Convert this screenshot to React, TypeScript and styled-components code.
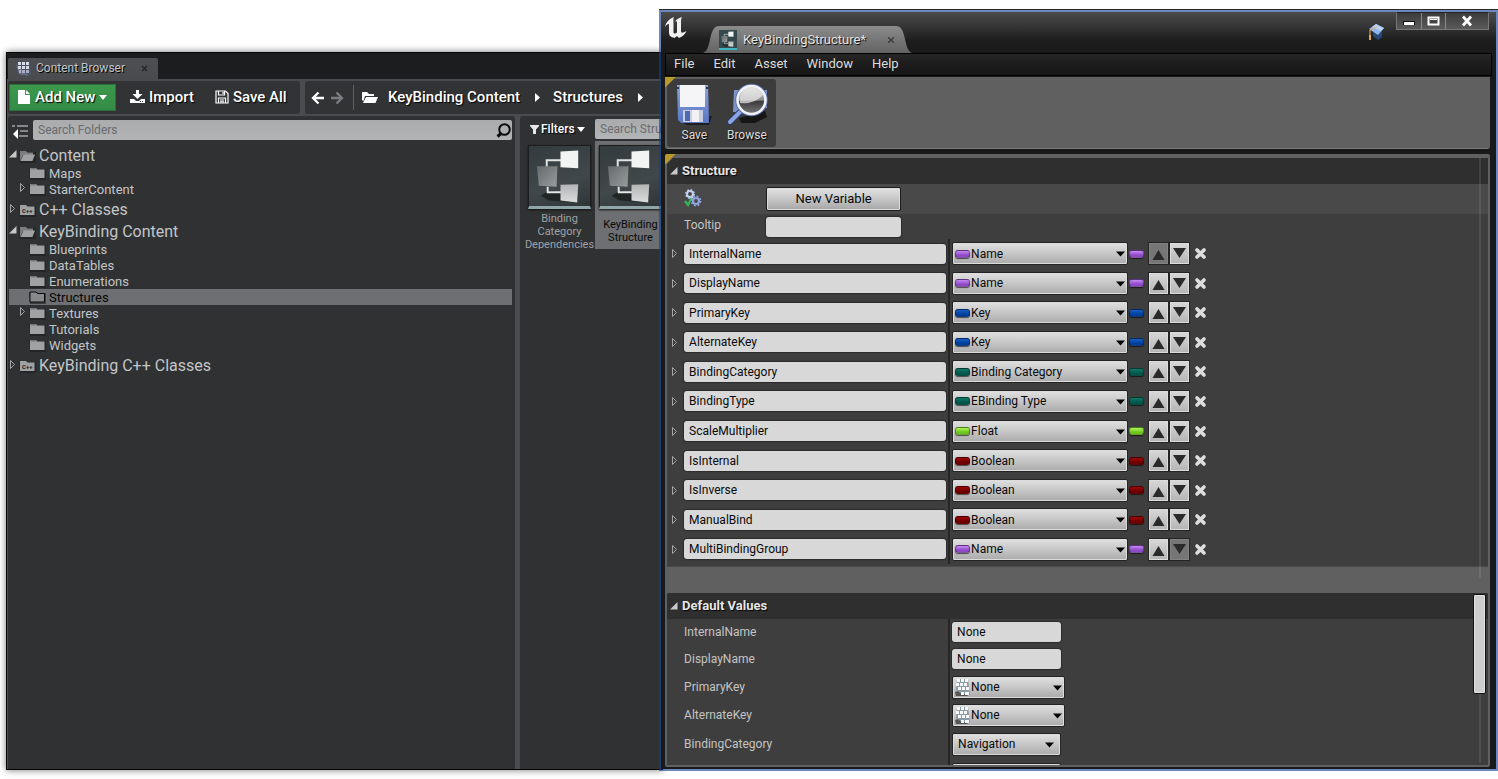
import React from 'react';
import styled, { createGlobalStyle, css } from 'styled-components';

const GlobalStyle = createGlobalStyle`
  *, *::before, *::after { box-sizing: border-box; }
  body { margin: 0; background: #fff; font-family: Roboto, "Liberation Sans", sans-serif; font-size: 12px; }
  button, input, select { font: inherit; color: inherit; margin: 0; padding: 0; border: 0; background: none; }
  ul { margin: 0; padding: 0; list-style: none; }
  h2 { margin: 0; }
  svg { flex: none; }
`;

const Desktop = styled.main`
  display: grid;
  grid-template-columns: 11fr 14fr;
  grid-template-rows: minmax(0, 1fr);
  height: 100vh;
  min-height: 480px;
  overflow: hidden;
`;

/* ---------- Content browser ---------- */

const BrowserWindow = styled.section`
  display: flex;
  flex-direction: column;
  min-width: 0;
  margin: 52px -4px 9px 6px;
  border: 1px solid #050505;
  background: #494b4e;
  color: #c3c5c7;
  box-shadow: 0 0 7px rgba(0, 0, 0, 0.55);
  overflow: hidden;
`;

const BrowserTitle = styled.header`
  display: flex;
  align-items: flex-end;
  height: 26px;
  padding-left: 1px;
  background: #1c1d1f;
  flex: none;
`;

const BrowserTab = styled.div`
  display: flex;
  align-items: center;
  width: 150px;
  height: 21px;
  padding: 0 8px 1px 7px;
  gap: 5px;
  background: linear-gradient(#4d4f52, #494b4e);
  border-radius: 2px 2px 0 0;
  text-shadow: 1px 1px 0 #000;
  > span { flex: 1; }
`;

const CloseButton = styled.button`
  display: flex;
  align-items: center;
  width: 9px;
  height: 11px;
`;

const ToolbarRow = styled.div`
  display: flex;
  gap: 5px;
  padding: 2px 0 2px 1px;
  flex: none;
`;

const ToolbarPanel = styled.div<{ $grow?: boolean }>`
  display: flex;
  align-items: center;
  height: 33px;
  background: #313335;
  border-radius: 3px;
  color: #fff;
  font-size: 15px;
  font-weight: 500;
  white-space: nowrap;
  text-shadow: 1px 1px 1px #000;
  ${p => p.$grow ? css`flex: 1; padding-left: 6px;` : css`width: 292px; padding-left: 1px;`}
`;

const ToolButton = styled.button<{ $primary?: boolean }>`
  display: flex;
  align-items: center;
  gap: 4px;
  height: 27px;
  padding: 0 7px 1px 14px;
  white-space: nowrap;
  text-shadow: inherit;
  ${p => p.$primary && css`
    width: 107px;
    padding: 0 7px 1px;
    background: linear-gradient(#3b984c, #358c46);
    border: 1px solid #2a7038;
  `}
`;

const ArrowButton = styled.button`
  display: flex;
  width: 14px;
  height: 14px;
  margin-right: 5px;
`;

const Separator = styled.i`
  width: 1px;
  height: 25px;
  margin: 0 8px 0 4px;
  background: #5d5f62;
`;

const Crumb = styled.button`
  display: flex;
  align-items: center;
  padding: 0 13px 1px 0;
  gap: 15px;
  text-shadow: inherit;
`;

const FolderCrumb = styled(Crumb)`
  padding-right: 10px;
`;

const BrowserBody = styled.div`
  display: flex;
  flex: 1;
  min-height: 0;
  gap: 5px;
  padding-left: 1px;
`;

const SourcesPanel = styled.nav`
  width: 507px;
  flex: none;
  background: #2f3133;
  border-radius: 3px 3px 0 0;
`;

const SearchRow = styled.div`
  display: flex;
  align-items: center;
  padding: 4px 3px 4px 4px;
  gap: 5px;
`;

const IconButton = styled.button`
  display: flex;
  align-items: flex-end;
  width: 16px;
  height: 18px;
`;

const SearchBox = styled.label`
  display: flex;
  align-items: center;
  flex: 1;
  min-width: 0;
  height: 20px;
  padding: 0 0 0 5px;
  border-radius: 2px;
  background: linear-gradient(#a9abad, #b2b4b6);
  input {
    flex: 1;
    min-width: 0;
    outline: 0;
    &::placeholder { color: #696b6d; opacity: 1; }
  }
`;

const TreeItem = styled.li<{ $root?: boolean }>`
  ${p => p.$root && css`padding-bottom: 1px;`}
`;

const TreeRow = styled.div<{ $root?: boolean; $selected?: boolean }>`
  display: flex;
  align-items: center;
  height: ${p => (p.$root ? 21 : 16)}px;
  margin: 0 3px 0 1px;
  padding-top: ${p => (p.$root ? 2 : 0)}px;
  padding-left: ${p => (p.$root ? 0 : 10)}px;
  font-size: ${p => (p.$root ? 16 : 13)}px;
  background: ${p => (p.$selected ? '#6d6f72' : 'none')};
  color: ${p => (p.$selected ? '#050505' : '#c3c5c7')};
`;

const Twisty = styled.button`
  display: flex;
  align-items: center;
  width: 10px;
  height: 12px;
  margin-bottom: 3px;
`;

const TreeLabel = styled.button`
  display: flex;
  align-items: center;
  gap: 3px;
`;

const AssetPanel = styled.div`
  flex: 1;
  min-width: 0;
  background: #2f3133;
  border-radius: 3px 0 0 0;
  overflow: hidden;
`;

const FilterRow = styled.div`
  display: flex;
  align-items: center;
  height: 25px;
  gap: 9px;
  padding: 1px 0 0 10px;
`;

const FilterButton = styled.button`
  display: flex;
  align-items: center;
  gap: 2px;
  width: 56px;
  flex: none;
  color: #fff;
  font-weight: 500;
  text-shadow: 1px 1px 1px #000;
`;

const AssetSearch = styled(SearchBox)`
  width: 200px;
  flex: none;
`;

const AssetGrid = styled.ul`
  display: flex;
  padding-left: 4px;
`;

const AssetTile = styled.li<{ $selected?: boolean }>`
  width: 71px;
  flex: none;
  height: 108px;
  padding: 4px 4px 0;
  overflow: hidden;
  background: ${p => (p.$selected ? '#6d6f72' : 'none')};
  color: ${p => (p.$selected ? '#0a0a0a' : '#9fa1a3')};
`;

const Thumb = styled.div`
  height: 64px;
  border: 1px solid #1c1d1e;
  background: linear-gradient(160deg, #343b3e, #40484b 60%, #2f3537);
  border-bottom: 3px solid #8fa7a9;
  box-shadow: 0 1px 2px #111;
  svg { display: block; }
`;

const TileName = styled.div`
  display: flex;
  flex-direction: column;
  align-items: center;
  justify-content: center;
  height: 43px;
  margin: 0 -4px;
  padding-top: 1px;
  font-size: 11px;
  line-height: 13px;
  white-space: nowrap;
`;

/* ---------- Structure editor ---------- */

const EditorWindow = styled.section`
  position: relative;
  display: flex;
  flex-direction: column;
  min-width: 0;
  margin: 10px 0 8px;
  padding: 0 4px 2px;
  border: 2px solid rgba(18, 63, 149, 0.62);
  background: linear-gradient(#4a4a4a, #353535 14px, #1e1e1e 28px, #191919 42px, #191919) padding-box;
  box-shadow: 0 -1px 0 #2b2b2b;
  color: #dcdcdc;
`;

const EditorTitle = styled.header`
  display: flex;
  align-items: flex-start;
  height: 41px;
  flex: none;
`;

const Logo = styled.svg`
  width: 24px;
  height: 24px;
  margin: 4px 15px 0 -1px;
`;

const EditorTab = styled.div`
  display: flex;
  align-self: flex-end;
  height: 27px;
`;

const TabCap = styled.i<{ $right?: boolean }>`
  width: 16px;
  background: linear-gradient(#8b8b8b, #636363);
  clip-path: path('M0 27 C4 25 5 22 7 13 C9 4 11 0 16 0 V27 Z');
  ${p => p.$right && css`transform: scaleX(-1);`}
`;

const TabBody = styled.div`
  display: flex;
  align-items: center;
  gap: 6px;
  width: 177px;
  background: linear-gradient(#8b8b8b, #636363);
  color: #e4e4e4;
  text-shadow: 1px 1px 1px #000;
  font-size: 13px;
  > span { flex: 1; }
`;

const MiniThumb = styled.div`
  width: 18px;
  height: 20px;
  flex: none;
  background: #33494e;
  border-bottom: 2px solid #3fb4c4;
  svg { display: block; }
`;

const TitleTools = styled.div`
  display: flex;
  gap: 11px;
  margin-left: auto;
  > svg { margin-top: 10px; }
`;

const WindowButtons = styled.div`
  display: flex;
  height: 18px;
  margin: 0 3px 0 0;
  border: 1px solid #777;
  border-top-color: #222;
`;

const WindowButton = styled.button<{ $wide?: boolean }>`
  display: flex;
  align-items: center;
  justify-content: center;
  width: ${p => (p.$wide ? 43 : 24)}px;
  background: linear-gradient(#3c3c3c, #5a5a5a);
  & + & { border-left: 1px solid #8a8a8a; }
`;

const MenuBar = styled.nav`
  display: flex;
  height: 23px;
  flex: none;
  border: 1px solid #000;
  background: linear-gradient(#262626, #1c1c1c 50%, #161616);
`;

const MenuButton = styled.button`
  padding: 0 11px 2px 8px;
  font-size: 13px;
`;

const corner = css`
  background: linear-gradient(135deg, #b89a2c 7px, transparent 8px) no-repeat, #606060;
`;

const EditorToolbar = styled.div`
  ${corner}
  height: 72px;
  flex: none;
  margin: 1px 2px 5px 0;
  padding: 2px;
  border-radius: 0 0 3px 3px;
  border-bottom: 1px solid #7a7a7a;
`;

const ToolGroup = styled.div`
  display: flex;
  width: 109px;
  height: 68px;
  padding: 0 3px 0 1px;
  border-radius: 3px;
  background: #3c3c3c;
  clip-path: polygon(7px 0, 100% 0, 100% 100%, 0 100%, 0 7px);
`;

const BigButton = styled.button`
  display: flex;
  flex-direction: column;
  align-items: center;
  gap: 1px;
  flex: 1;
  padding-top: 4px;
  text-shadow: 1px 1px 1px #000;
`;

const Details = styled.div`
  ${corner}
  position: relative;
  display: flex;
  flex-direction: column;
  flex: 1;
  min-height: 0;
  margin-right: 2px;
  padding: 4px 2px 2px 2px;
  border-radius: 2px;
`;

const StructurePane = styled.section`
  flex: none;
  background: #3e3e3e;
  border-bottom: 1px solid #4a4a4a;
  margin-bottom: 26px;
  clip-path: polygon(6px 0, 100% 0, 100% 100%, 0 100%, 0 6px);
`;

const DefaultsPane = styled.section`
  flex: 1;
  min-height: 0;
  overflow: hidden;
  background: #3e3e3e;
  border-radius: 2px 2px 0 0;
`;

const SectionHead = styled.header`
  display: flex;
  align-items: center;
  gap: 4px;
  height: 26px;
  padding: 0 0 1px 3px;
  background: #2f2f2f;
  color: #e6e6e6;
  h2 {
    font-size: 13px;
    font-weight: 700;
    text-shadow: 1px 1px 1px #000;
  }
`;

const HeaderRow = styled.div<{ $light?: boolean }>`
  display: flex;
  align-items: center;
  height: ${p => (p.$light ? 30 : 25)}px;
  padding-left: 17px;
  background: ${p => (p.$light ? '#494949' : 'none')};
  color: #c4c4c4;
  > :first-child { width: 82px; padding-bottom: ${p => (p.$light ? 0 : 4)}px; }
`;

const NewVariableButton = styled.button`
  width: 135px;
  height: 24px;
  padding-bottom: 2px;
  border: 1px solid #1c1c1c;
  border-radius: 2px;
  background: linear-gradient(#e2e2e2, #c6c6c6 50%, #a6a6a6);
  box-shadow: inset 0 0 0 1px #dcdcdc;
  color: #080808;
  font-size: 13px;
`;

const TextField = styled.input`
  width: 100%;
  height: 20px;
  padding: 0 5px;
  border-radius: 3px;
  background: #d8d8d8;
  box-shadow: 0 0 1px 1px #2c2c2c;
  color: #0a0a0a;
  outline: 0;
`;

const TooltipField = styled(TextField)`
  width: 135px;
`;

const VariableList = styled.div`
  display: grid;
  grid-auto-rows: 1fr;
  height: 325px;
  margin-bottom: 2px;
`;

const PropertyRow = styled.div<{ $height?: number }>`
  display: grid;
  grid-template-columns: 283px 1fr;
  ${p => p.$height && css`height: ${p.$height}px;`}
`;

const NameCell = styled.div`
  display: flex;
  align-items: center;
  min-width: 0;
  padding: 0 2px 0 4px;
  border-right: 2px solid #262626;
`;

const LabelCell = styled(NameCell)`
  padding-left: 17px;
  color: #c4c4c4;
`;

const RowTwisty = styled.button`
  display: flex;
  align-items: center;
  width: 13px;
  height: 14px;
  flex: none;
`;

const ValueCell = styled.div`
  display: flex;
  align-items: center;
  min-width: 0;
  padding-left: 2px;
`;

const Combo = styled.div<{ $width: number }>`
  position: relative;
  width: ${p => p.$width}px;
  flex: none;
`;

const ComboSelect = styled.select<{ $icon?: boolean }>`
  display: block;
  appearance: none;
  width: 100%;
  height: 23px;
  padding: 0 18px 0 ${p => (p.$icon ? 18 : 5)}px;
  border: 1px solid #242424;
  border-radius: 2px;
  background: linear-gradient(#e0e0e0, #c6c6c6 50%, #aaaaaa);
  box-shadow: inset 0 0 0 1px #dcdcdc;
  color: #0a0a0a;
  outline: 0;
`;

const ComboIcon = styled.span`
  position: absolute;
  left: 3px;
  top: 50%;
  transform: translateY(-50%);
  display: flex;
  pointer-events: none;
`;

const ComboArrow = styled.svg<{ $inset: number }>`
  position: absolute;
  right: ${p => p.$inset}px;
  top: 9px;
  width: 9px;
  height: 6px;
  pointer-events: none;
`;

const Pill = styled.i<{ $color: string; $lit: string }>`
  width: 15px;
  height: 8px;
  flex: none;
  border-radius: 3px;
  border: 1px solid rgba(0, 0, 0, 0.35);
  background: linear-gradient(${p => p.$lit}, ${p => p.$color} 70%);
  box-shadow: 0 1px 1px rgba(0, 0, 0, 0.6);
`;

const RowTools = styled.div`
  display: flex;
  align-items: center;
  margin-left: 4px;
`;

const PinSlot = styled.div`
  display: flex;
  margin-left: 1px;
`;

const MoveButton = styled.button`
  display: flex;
  align-items: center;
  justify-content: center;
  width: 21px;
  height: 23px;
  border: 1px solid #242424;
  background: linear-gradient(#d8d8d8, #b4b4b4);
  box-shadow: inset 0 0 0 1px #dcdcdc;
  &:disabled {
    background: #767676;
    box-shadow: inset 0 0 0 1px #828282;
  }
`;

const DeleteButton = styled.button`
  display: flex;
  margin-left: 4px;
`;

const ScrollTrack = styled.i<{ $top: number; $height?: number }>`
  position: absolute;
  right: 9px;
  top: ${p => p.$top}px;
  width: 2px;
  ${p => (p.$height ? css`height: ${p.$height}px;` : css`bottom: 4px;`)}
  background: rgba(255, 255, 255, 0.09);
`;

const ScrollThumb = styled.i`
  position: absolute;
  right: 4px;
  top: 440px;
  width: 13px;
  height: 100px;
  border: 1px solid #111;
  border-radius: 2px;
  background: #cdcdcd;
  box-shadow: inset 0 0 0 1px #e2e2e2;
`;

/* ---------- Drawings ---------- */

const CloseGlyph = ({ color = '#222', size = 7 }: { color?: string; size?: number }) => (
  <svg width={size} height={size} viewBox="0 0 7 7"><path d="M1 1 6 6M6 1 1 6" stroke={color} strokeWidth="1.2" /></svg>
);

const GridIcon = () => (
  <svg width="16" height="15" viewBox="0 0 16 15">
    <path d="M1 1 15 0 16 14 4 13Z" fill="#4b5268" />
    <path d="M1 4 4 13 14 15" fill="#69718c" />
    <g fill="#d6dae4">
      <path d="M3 1h3v3H3zM7 1h3v3H7zM11 1h3v3h-3zM3 5h3v3H3zM7 5h3v3H7zM11 5h3v3h-3z" />
      <path d="M4 9h2v3H4zM7 9h3v3H7zM11 9h3v3h-3z" fill="#a7aec2" />
    </g>
  </svg>
);

const PageIcon = () => (
  <svg width="14" height="16" viewBox="0 0 14 16"><path d="M1 1h7v5h5v9H1z" fill="#fff" /><path d="M9 1l4 4H9z" fill="#fff" /></svg>
);

const ImportIcon = () => (
  <svg width="15" height="14" viewBox="0 0 15 14">
    <path d="M6 0h3v4h3.500L7.500 9 2.500 4H6z" fill="#fff" />
    <path d="M0 9h4l2 2h3l2-2h4v4H0z" fill="#fff" />
    <path d="M10 11.500h1M12 11.500h1" stroke="#313335" />
  </svg>
);

const SaveIcon = () => (
  <svg width="14" height="14" viewBox="0 0 14 14" fill="none" stroke="#fff" strokeWidth="1.200">
    <path d="M1 1h9.500L13 3.500V13H1z" /><path d="M3.500 1v4h6V1M3.500 13V8h7v5M5 10h4M5 11.800h4M8 2v2" />
  </svg>
);

const HistoryArrow = ({ back }: { back?: boolean }) => (
  <svg width="14" height="14" viewBox="0 0 14 14">
    <path d={back ? 'M13 7H3M7.500 1.500 2 7l5.500 5.500' : 'M1 7h10M6.500 1.500 12 7l-5.500 5.500'} fill="none" stroke={back ? '#fff' : '#7b7d80'} strokeWidth="2.300" />
  </svg>
);

const OpenFolderBold = () => (
  <svg width="16" height="13" viewBox="0 0 16 13">
    <path d="M0 1h5l2 2h5v2H3L1.500 10 0 9z" fill="#fff" /><path d="M4 6h12l-2.500 6H1z" fill="#fff" />
  </svg>
);

const CaretRight = () => <svg width="5" height="9" viewBox="0 0 5 9"><path d="M0 0 5 4.500 0 9z" fill="#fff" /></svg>;

const CaretDown = ({ color = '#fff' }: { color?: string }) => (
  <svg width="8" height="5" viewBox="0 0 8 5"><path d="M0 0h8L4 5z" fill={color} /></svg>
);

const CollapseIcon = () => (
  <svg width="16" height="15" viewBox="0 0 16 15">
    <path d="M0 1h3v2H0zM5 1h11v2H5zM8 6h8v2H8zM7 11h9v2H7z" fill="#85878a" />
    <path d="M6 5v10L1 10z" fill="#fff" />
  </svg>
);

const SearchGlyph = () => (
  <svg width="17" height="17" viewBox="0 0 17 17" fill="none" stroke="#0c0c0c">
    <circle cx="9.500" cy="7.500" r="5.300" strokeWidth="2" /><path d="M6 11.500 2.500 14.500" strokeWidth="3" />
  </svg>
);

const FolderIcon = ({ kind, selected }: { kind: 'open' | 'closed' | 'cpp'; selected?: boolean }) => (
  <svg width="17" height="14" viewBox="0 0 17 14">
    <path d="M0 2h8l1 1h8v11H1z" fill="#1d1e1f" opacity=".6" />
    {kind === 'open' ? (
      <>
        <path d="M1 2h6l1.500 1.500H14V6H4L1 12z" fill="#7b7d7f" />
        <path d="M4.500 5.500H16L13.500 12H1.500z" fill="#9fa1a3" />
      </>
    ) : (
      <path d="M1 2h6l1.500 1.500H15.500V12H1z" fill={selected ? '#87898b' : '#9fa1a3'} stroke={selected ? '#0a0a0a' : 'none'} />
    )}
    {kind === 'closed' && !selected && <path d="M1.500 2h5l1 1.500h-6z" fill="#77797b" />}
    {kind === 'cpp' && <text x="3" y="10" fontSize="6" fontWeight="700" fill="#222">C++</text>}
  </svg>
);

const ExpandGlyph = ({ open }: { open?: boolean }) => open ? (
  <svg width="8" height="8" viewBox="0 0 8 8"><path d="M7.500 0v7.500H0z" fill="#c8c8c8" /></svg>
) : (
  <svg width="7" height="11" viewBox="0 0 7 11"><path d="M1.500 1.500 5.500 5.500 1.500 9.500z" fill="none" stroke="#a2a4a6" /></svg>
);

const FunnelIcon = () => (
  <svg width="9" height="9" viewBox="0 0 9 9"><path d="M0 0h9v1L6 4.500V9H3V4.500L0 1z" fill="#e8e8e8" /></svg>
);

const StructArt = ({ width, height }: { width: number; height: number }) => (
  <svg width={width} height={height} viewBox="0 0 62 60">
    <defs>
      <linearGradient id="mid" x1="0" y1="0" x2="1" y2="1"><stop offset="0" stopColor="#66696b" /><stop offset="1" stopColor="#999c9d" /></linearGradient>
      <linearGradient id="low" x1="0" y1="0" x2="0" y2="1"><stop offset="0" stopColor="#b2b4b5" /><stop offset="1" stopColor="#dcdddd" /></linearGradient>
    </defs>
    <path d="M12 50 20 45 50 50 49 57 20 55z" fill="#15191a" opacity=".7" />
    <path d="M18 21V14H33M19 41v5.500H33" fill="none" stroke="#e4e6e6" strokeWidth="2" />
    <path d="M8 20 29 20 28 41 10 40z" fill="url(#mid)" />
    <path d="M32 5 50 4 50 22 32 21z" fill="#f2f3f3" />
    <path d="M32 39 50 38.500 49 57 32 55z" fill="url(#low)" />
  </svg>
);

const FloppyArt = () => (
  <svg width="38" height="44" viewBox="0 0 38 44">
    <defs><linearGradient id="floppy" x1="0" y1="0" x2="0" y2="1"><stop offset="0" stopColor="#8ea4dd" /><stop offset="1" stopColor="#5a77c4" /></linearGradient></defs>
    <path d="M4 38 37 33 34 42H12z" fill="#111" opacity=".7" />
    <path d="M2 2h31l1 38H6l-3-3z" fill="url(#floppy)" />
    <path d="M5 2h25v22H5z" fill="#f5f5f7" />
    <path d="M2 4h2v2H2zM31 4h2v2h-2z" fill="#26345f" />
    <path d="M8 27h20v12H8z" fill="#c9cfe0" />
    <path d="M10 28h5v10h-5z" fill="#4f6ab0" /><path d="M17 27h7v12h-7z" fill="#f2f2f4" />
  </svg>
);

const MagnifierArt = () => (
  <svg width="44" height="44" viewBox="0 0 44 44">
    <defs>
      <linearGradient id="glass" x1="0" y1="0" x2="0" y2="1"><stop offset="0" stopColor="#d8d8d8" /><stop offset=".5" stopColor="#8b8b8b" /><stop offset=".55" stopColor="#3c3c3c" /><stop offset="1" stopColor="#808080" /></linearGradient>
    </defs>
    <path d="M9 7h9v22H8zM33 7h9v18h-9z" fill="#7d93cc" />
    <path d="M14 35 40 28 42 34 30 40H16z" fill="#0c0c0c" opacity=".8" />
    <path d="M15 29 5 39" stroke="#28386c" strokeWidth="6" strokeLinecap="round" />
    <path d="M15 29 5 39" stroke="#8aa4e4" strokeWidth="4" strokeLinecap="round" />
    <circle cx="26.500" cy="17" r="15.500" fill="url(#glass)" stroke="#5d6fa8" strokeWidth="1.500" />
    <path d="M15 20C21 21 30 20 38 12 36 7 31 4.500 26 4.500 18 4.500 13 12 15 20z" fill="#efefef" opacity=".7" />
    <circle cx="26.500" cy="17" r="14" fill="none" stroke="#f1f3fa" strokeWidth="2.600" />
  </svg>
);

const GearsIcon = () => (
  <svg width="18" height="18" viewBox="0 0 18 18">
    <path d="M1 12 4 16 9 6" fill="none" stroke="#35b558" strokeWidth="2.200" />
    <circle cx="6" cy="5" r="3" fill="none" stroke="#c4cfee" strokeWidth="2" />
    <circle cx="6" cy="5" r="4.200" fill="none" stroke="#c4cfee" strokeWidth="1.500" strokeDasharray="1.700 1.600" />
    <circle cx="12" cy="12" r="3" fill="none" stroke="#8fa3dc" strokeWidth="2.200" />
    <circle cx="12" cy="12" r="4.700" fill="none" stroke="#8fa3dc" strokeWidth="1.500" strokeDasharray="1.900 1.790" />
  </svg>
);

const CapIcon = () => (
  <svg width="18" height="20" viewBox="0 0 18 20">
    <path d="M6 10v4l5 4 4-3V8z" fill="#28487c" />
    <path d="M9 2 17 6 11 13 2 7z" fill="#8fb6e8" /><path d="M9 2 17 6 14 9 5 5z" fill="#b5d2f5" />
    <path d="M10 5 3 8v6" fill="none" stroke="#e0b070" strokeWidth="1" /><path d="M2 13h2v5H2z" fill="#dba65c" />
  </svg>
);

const KeyboardIcon = () => (
  <svg width="15" height="18" viewBox="0 0 15 18">
    <path d="M0 14 6 12 15 16 12 18H1z" fill="#555" />
    <path d="M2 1h11l2 15H7L1 12z" fill="#8a9ba3" />
    <g fill="#f6f8f9">
      <path d="M2 1h3v3H2zM6 1h3v3H6zM10 1h3v3h-3zM1 5h3v3H1zM5 5h3v3H5zM9 5h3v3H9zM3 9h3v3H3zM7 9h3v3H7zM11 9h3v3h-3zM6 14h3v3H6zM10 14h4v3h-4z" />
    </g>
  </svg>
);

const DeleteGlyph = () => (
  <svg width="13" height="13" viewBox="0 0 13 13"><path d="M3 3l7 7M10 3l-7 7" stroke="#dedede" strokeWidth="3.600" strokeLinecap="round" /></svg>
);

const Triangle = ({ down }: { down?: boolean }) => (
  <svg width="13" height="13" viewBox="0 0 13 13"><path d={down ? 'M0 1h13L6.500 11z' : 'M6.500 3 12.500 13H.500z'} fill="#2a2a2a" /></svg>
);

/* ---------- Data ---------- */

const pills = {
  Name: ['#8f4ac8', '#c788f4'],
  Key: ['#003f9c', '#1a5fc4'],
  Enum: ['#04564a', '#0f7a68'],
  Float: ['#6cc61c', '#b0f45c'],
  Boolean: ['#6e0000', '#a00808'],
} as const;

const variables: { name: string; type: string; pill: keyof typeof pills }[] = [
  { name: 'InternalName', type: 'Name', pill: 'Name' },
  { name: 'DisplayName', type: 'Name', pill: 'Name' },
  { name: 'PrimaryKey', type: 'Key', pill: 'Key' },
  { name: 'AlternateKey', type: 'Key', pill: 'Key' },
  { name: 'BindingCategory', type: 'Binding Category', pill: 'Enum' },
  { name: 'BindingType', type: 'EBinding Type', pill: 'Enum' },
  { name: 'ScaleMultiplier', type: 'Float', pill: 'Float' },
  { name: 'IsInternal', type: 'Boolean', pill: 'Boolean' },
  { name: 'IsInverse', type: 'Boolean', pill: 'Boolean' },
  { name: 'ManualBind', type: 'Boolean', pill: 'Boolean' },
  { name: 'MultiBindingGroup', type: 'Name', pill: 'Name' },
];

type Folder = { name: string; kind: 'open' | 'cpp'; children?: { name: string; more?: boolean }[] };

const tree: Folder[] = [
  { name: 'Content', kind: 'open', children: [{ name: 'Maps' }, { name: 'StarterContent', more: true }] },
  { name: 'C++ Classes', kind: 'cpp' },
  {
    name: 'KeyBinding Content', kind: 'open',
    children: [
      { name: 'Blueprints' }, { name: 'DataTables' }, { name: 'Enumerations' }, { name: 'Structures' },
      { name: 'Textures', more: true }, { name: 'Tutorials' }, { name: 'Widgets' },
    ],
  },
  { name: 'KeyBinding C++ Classes', kind: 'cpp' },
];

const assets = [
  { lines: ['Binding', 'Category', 'Dependencies'] },
  { lines: ['KeyBinding', 'Structure'], selected: true },
];

const DropDown = ({ id, label, value, width, icon, inset = 3 }: {
  id?: string; label?: string; value: string; width: number; icon?: React.ReactNode; inset?: number;
}) => (
  <Combo $width={width}>
    <ComboSelect id={id} aria-label={label} $icon={!!icon} defaultValue={value}>
      <option>{value}</option>
    </ComboSelect>
    {icon && <ComboIcon>{icon}</ComboIcon>}
    <ComboArrow $inset={inset} viewBox="0 0 9 6"><path d="M0 .500h9L4.500 5.500z" fill="#050505" /></ComboArrow>
  </Combo>
);

const ContentBrowser = () => (
  <BrowserWindow>
    <BrowserTitle>
      <BrowserTab>
        <GridIcon />
        <span>Content Browser</span>
        <CloseButton aria-label="Close tab"><CloseGlyph /></CloseButton>
      </BrowserTab>
    </BrowserTitle>
    <ToolbarRow>
      <ToolbarPanel>
        <ToolButton $primary><PageIcon />Add New<CaretDown /></ToolButton>
        <ToolButton><ImportIcon />Import</ToolButton>
        <ToolButton><SaveIcon />Save All</ToolButton>
      </ToolbarPanel>
      <ToolbarPanel $grow>
        <ArrowButton aria-label="Back"><HistoryArrow back /></ArrowButton>
        <ArrowButton aria-label="Forward"><HistoryArrow /></ArrowButton>
        <Separator />
        <FolderCrumb aria-label="Choose path"><OpenFolderBold /></FolderCrumb>
        <Crumb>KeyBinding Content<CaretRight /></Crumb>
        <Crumb>Structures<CaretRight /></Crumb>
      </ToolbarPanel>
    </ToolbarRow>
    <BrowserBody>
      <SourcesPanel>
        <SearchRow>
          <IconButton aria-label="Collapse sources"><CollapseIcon /></IconButton>
          <SearchBox><input aria-label="Search Folders" placeholder="Search Folders" /><SearchGlyph /></SearchBox>
        </SearchRow>
        <ul>
          {tree.map(root => (
            <TreeItem key={root.name} $root>
              <TreeRow $root>
                <Twisty aria-label={`Toggle ${root.name}`}><ExpandGlyph open={root.kind === 'open'} /></Twisty>
                <TreeLabel><FolderIcon kind={root.kind} />{root.name}</TreeLabel>
              </TreeRow>
              {root.children && (
                <ul>
                  {root.children.map(c => (
                    <TreeItem key={c.name}>
                      <TreeRow $selected={c.name === 'Structures'}>
                        <Twisty aria-label={`Toggle ${c.name}`}>{c.more && <ExpandGlyph />}</Twisty>
                        <TreeLabel><FolderIcon kind="closed" selected={c.name === 'Structures'} />{c.name}</TreeLabel>
                      </TreeRow>
                    </TreeItem>
                  ))}
                </ul>
              )}
            </TreeItem>
          ))}
        </ul>
      </SourcesPanel>
      <AssetPanel>
        <FilterRow>
          <FilterButton><FunnelIcon />Filters<CaretDown /></FilterButton>
          <AssetSearch><input aria-label="Search Structures" placeholder="Search Structures" /></AssetSearch>
        </FilterRow>
        <AssetGrid>
          {assets.map(a => (
            <AssetTile key={a.lines[0]} $selected={a.selected}>
              <Thumb><StructArt width={61} height={60} /></Thumb>
              <TileName>{a.lines.map(l => <span key={l}>{l}</span>)}</TileName>
            </AssetTile>
          ))}
        </AssetGrid>
      </AssetPanel>
    </BrowserBody>
  </BrowserWindow>
);

const VariableRow = ({ index }: { index: number }) => {
  const v = variables[index];
  const [color, lit] = pills[v.pill];
  return (
    <PropertyRow>
      <NameCell>
        <RowTwisty aria-label={`Expand ${v.name}`}><ExpandGlyph /></RowTwisty>
        <TextField aria-label="Variable name" defaultValue={v.name} />
      </NameCell>
      <ValueCell>
        <DropDown label={`${v.name} type`} value={v.type} width={176} icon={<Pill $color={color} $lit={lit} />} />
        <PinSlot><Pill $color={color} $lit={lit} /></PinSlot>
        <RowTools>
          <MoveButton aria-label="Move up" disabled={index === 0}><Triangle /></MoveButton>
          <MoveButton aria-label="Move down" disabled={index === variables.length - 1}><Triangle down /></MoveButton>
          <DeleteButton aria-label="Delete variable"><DeleteGlyph /></DeleteButton>
        </RowTools>
      </ValueCell>
    </PropertyRow>
  );
};

const DefaultRow = ({ name, height, children }: { name: string; height: number; children: React.ReactNode }) => (
  <PropertyRow $height={height}>
    <LabelCell as="label" htmlFor={`default-${name}`}>{name}</LabelCell>
    <ValueCell>{children}</ValueCell>
  </PropertyRow>
);

const DefaultText = styled(TextField)`
  width: 109px;
`;

const StructureEditor = () => (
  <EditorWindow>
    <EditorTitle>
      <Logo viewBox="0 0 24 24" aria-label="Unreal">
        <path d="M1 11C2 6 5 3 10 1 9 3 9.500 4 9.500 6V16c0 2 2 2 3.500 .500V6C13 5 12 5 11 5.500 12.500 3 15 2 18 1 17 3 17 4 17 6v9c0 2 1 2.500 5.500 0C20 20 17 21 15 22l-2-2-2.500 2C7 21 5 20 5 16V8C3.500 8 2 9 1 11z" fill="#f1f1f1" />
      </Logo>
      <EditorTab>
        <TabCap />
        <TabBody>
          <MiniThumb><StructArt width={18} height={18} /></MiniThumb>
          <span>KeyBindingStructure*</span>
          <CloseButton aria-label="Close tab"><CloseGlyph color="#3a3a3a" size={8} /></CloseButton>
        </TabBody>
        <TabCap $right />
      </EditorTab>
      <TitleTools>
        <CapIcon />
        <WindowButtons>
          <WindowButton aria-label="Minimize"><svg width="12" height="12"><path d="M0 6h12v4H0z" fill="#111" /><path d="M1 7h10v3H1z" fill="#fff" /></svg></WindowButton>
          <WindowButton aria-label="Maximize"><svg width="13" height="12"><path d="M1.500 2.500h10v7h-10z" fill="#444" stroke="#fff" strokeWidth="2" /><path d="M3 4.500h7" stroke="#fff" strokeWidth="1" /></svg></WindowButton>
          <WindowButton $wide aria-label="Close"><svg width="12" height="12"><path d="M2 1.500 10 10.500M10 1.500 2 10.500" stroke="#fff" strokeWidth="2.800" /></svg></WindowButton>
        </WindowButtons>
      </TitleTools>
    </EditorTitle>
    <MenuBar>
      {['File', 'Edit', 'Asset', 'Window', 'Help'].map(m => <MenuButton key={m}>{m}</MenuButton>)}
    </MenuBar>
    <EditorToolbar>
      <ToolGroup>
        <BigButton><FloppyArt />Save</BigButton>
        <BigButton><MagnifierArt />Browse</BigButton>
      </ToolGroup>
    </EditorToolbar>
    <Details>
      <StructurePane>
        <SectionHead><ExpandGlyph open /><h2>Structure</h2></SectionHead>
        <HeaderRow $light>
          <span><GearsIcon /></span>
          <NewVariableButton>New Variable</NewVariableButton>
        </HeaderRow>
        <HeaderRow>
          <label htmlFor="tooltip">Tooltip</label>
          <TooltipField id="tooltip" />
        </HeaderRow>
        <VariableList>
          {variables.map((v, i) => <VariableRow key={v.name} index={i} />)}
        </VariableList>
      </StructurePane>
      <DefaultsPane>
        <SectionHead><ExpandGlyph open /><h2>Default Values</h2></SectionHead>
        <DefaultRow name="InternalName" height={26}><DefaultText id="default-InternalName" defaultValue="None" /></DefaultRow>
        <DefaultRow name="DisplayName" height={28}><DefaultText id="default-DisplayName" defaultValue="None" /></DefaultRow>
        <DefaultRow name="PrimaryKey" height={28}><DropDown id="default-PrimaryKey" value="None" width={113} icon={<KeyboardIcon />} /></DefaultRow>
        <DefaultRow name="AlternateKey" height={28}><DropDown id="default-AlternateKey" value="None" width={113} icon={<KeyboardIcon />} /></DefaultRow>
        <DefaultRow name="BindingCategory" height={30}><DropDown id="default-BindingCategory" value="Navigation" width={109} inset={7} /></DefaultRow>
        <PropertyRow $height={30}>
          <LabelCell />
          <ValueCell><DropDown label="BindingType" value="" width={109} inset={7} /></ValueCell>
        </PropertyRow>
      </DefaultsPane>
      <ScrollTrack $top={4} $height={420} />
      <ScrollTrack $top={540} />
      <ScrollThumb />
    </Details>
  </EditorWindow>
);

export default function App() {
  return (
    <>
      <GlobalStyle />
      <Desktop>
        <ContentBrowser />
        <StructureEditor />
      </Desktop>
    </>
  );
}
